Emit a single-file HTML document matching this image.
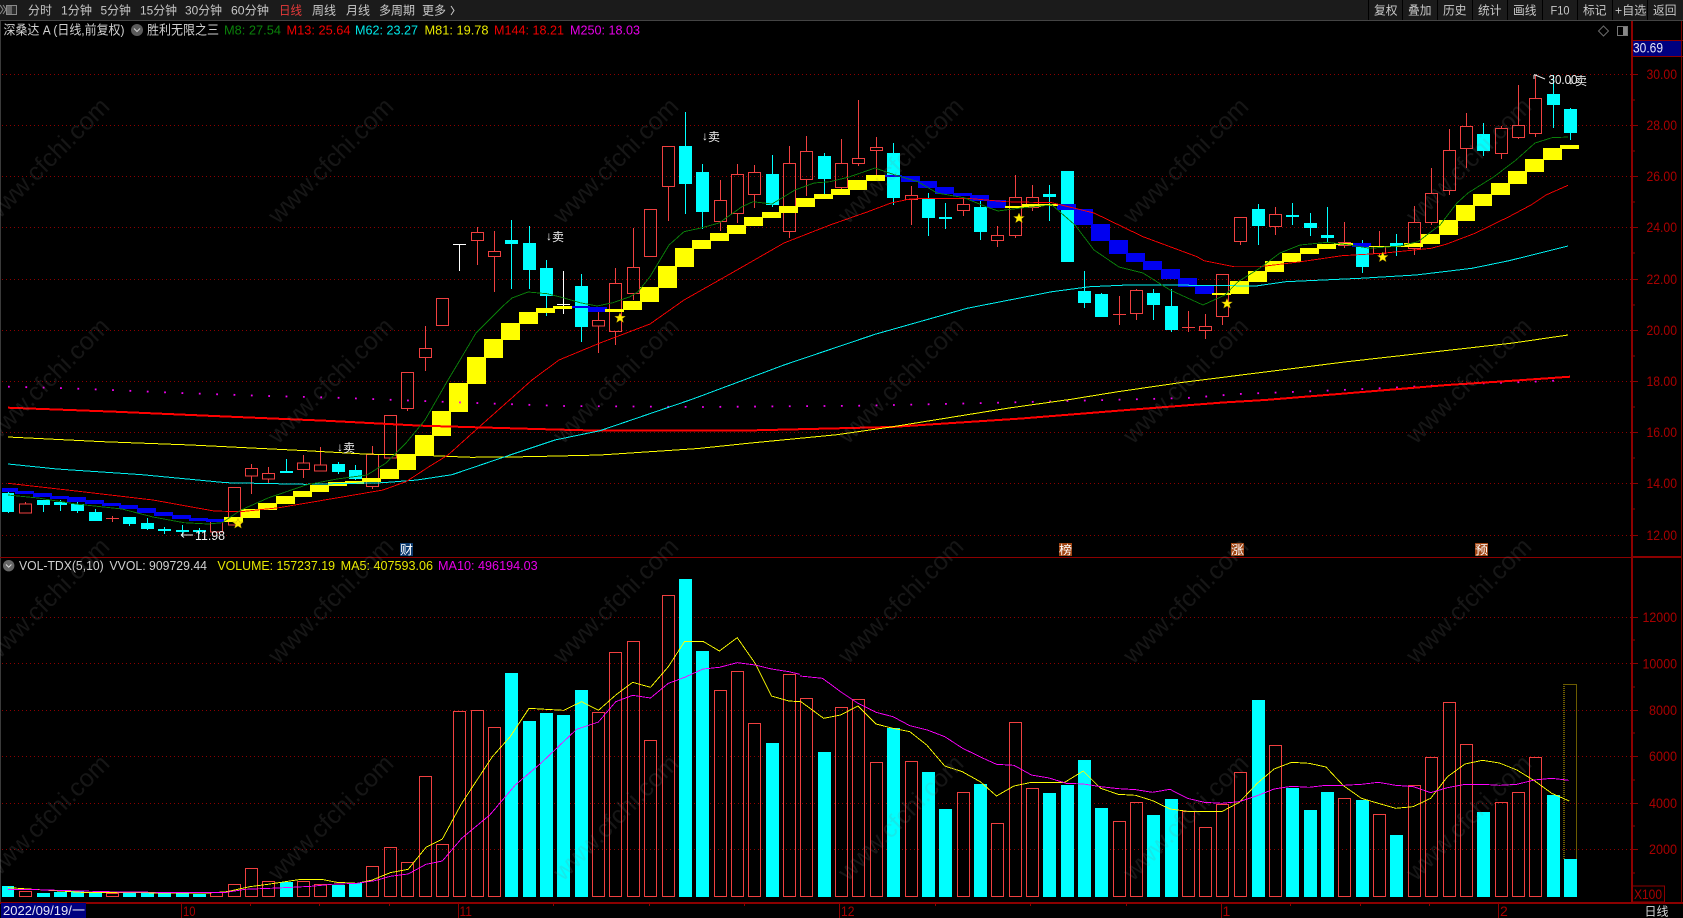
<!DOCTYPE html>
<html lang="zh"><head><meta charset="utf-8"><title>深桑达A</title>
<style>
html,body{margin:0;padding:0;background:#000;width:1683px;height:918px;overflow:hidden}
svg{display:block;font-family:"Liberation Sans","Noto Sans CJK SC",sans-serif}
.t{font-size:12px;fill:#c8c8c8}
.h{font-size:13px}
.ax{font-size:14px;fill:#a80000}
.ln{fill:none;shape-rendering:crispEdges;stroke-width:.9}
</style></head><body>
<svg width="1683" height="918" viewBox="0 0 1683 918" xmlns="http://www.w3.org/2000/svg">
<rect width="1683" height="918" fill="#000"/>
<!-- toolbar -->
<rect width="1683" height="20" fill="#1b1b1b"/>
<rect y="20" width="1683" height="1" fill="#444"/>
<path d="M0 5l3 4.500-3 4.500M3 5l3 4.500-3 4.500" fill="none" stroke="#8a8a8a"/>
<rect x="6.500" y="5.500" width="10" height="9" fill="#2c2c2c" stroke="#8a8a8a"/><rect x="7" y="6" width="5" height="8" fill="#666"/>
<g class="t">
<text class="t" x="28" y="14.5" textLength="24" lengthAdjust="spacingAndGlyphs">分时</text>
<text class="t" x="61" y="14.5" textLength="31" lengthAdjust="spacingAndGlyphs">1分钟</text>
<text class="t" x="100.5" y="14.5" textLength="30.5" lengthAdjust="spacingAndGlyphs">5分钟</text>
<text class="t" x="140" y="14.5" textLength="37" lengthAdjust="spacingAndGlyphs">15分钟</text>
<text class="t" x="185" y="14.5" textLength="37" lengthAdjust="spacingAndGlyphs">30分钟</text>
<text class="t" x="231" y="14.5" textLength="38" lengthAdjust="spacingAndGlyphs">60分钟</text>
<text class="t" x="279" y="14.5" textLength="23" lengthAdjust="spacingAndGlyphs" style="fill:#e83a3a">日线</text>
<text class="t" x="312" y="14.5" textLength="24" lengthAdjust="spacingAndGlyphs">周线</text>
<text class="t" x="346" y="14.5" textLength="24" lengthAdjust="spacingAndGlyphs">月线</text>
<text class="t" x="379" y="14.5" textLength="36" lengthAdjust="spacingAndGlyphs">多周期</text>
<text class="t" x="422" y="14.5" textLength="24" lengthAdjust="spacingAndGlyphs">更多</text>
<path d="M451 6l3 4.500-3 4.500" fill="none" stroke="#c8c8c8"/>
<text class="t" x="1374" y="14.500" textLength="23.500" lengthAdjust="spacingAndGlyphs">复权</text>
<text class="t" x="1408" y="14.500" textLength="23.500" lengthAdjust="spacingAndGlyphs">叠加</text>
<text class="t" x="1443" y="14.500" textLength="23.500" lengthAdjust="spacingAndGlyphs">历史</text>
<text class="t" x="1478" y="14.500" textLength="23.500" lengthAdjust="spacingAndGlyphs">统计</text>
<text class="t" x="1513" y="14.500" textLength="23.500" lengthAdjust="spacingAndGlyphs">画线</text>
<text class="t" x="1550.500" y="14.500" textLength="19" lengthAdjust="spacingAndGlyphs">F10</text>
<text class="t" x="1583" y="14.500" textLength="23.500" lengthAdjust="spacingAndGlyphs">标记</text>
<text class="t" x="1615" y="14.500" textLength="31.500" lengthAdjust="spacingAndGlyphs">+自选</text>
<text class="t" x="1653" y="14.500" textLength="23.500" lengthAdjust="spacingAndGlyphs">返回</text>
</g>
<path d="M1368.500 0V20M1402.500 0V20M1437.500 0V20M1472.500 0V20M1507.500 0V20M1542.500 0V20M1577.500 0V20M1612.500 0V20M1647.500 0V20" stroke="#000" shape-rendering="crispEdges"/>

<!-- header -->
<text class="h" x="3.500" y="34.500" fill="#d0d0d0" textLength="121" lengthAdjust="spacingAndGlyphs">深桑达 A (日线,前复权)</text>
<circle cx="137" cy="30" r="6" fill="#5a5a5a"/><path d="M134 28.500l3 3 3-3" fill="none" stroke="#d0d0d0"/>
<text class="h" x="147" y="34.500" fill="#d0d0d0" textLength="72" lengthAdjust="spacingAndGlyphs">胜利无限之三</text>
<text class="h" x="224" y="34.500" fill="#0a800a" textLength="57" lengthAdjust="spacingAndGlyphs">M8: 27.54</text>
<text class="h" x="286.500" y="34.500" fill="#f00000" textLength="64" lengthAdjust="spacingAndGlyphs">M13: 25.64</text>
<text class="h" x="355" y="34.500" fill="#00e8e8" textLength="63" lengthAdjust="spacingAndGlyphs">M62: 23.27</text>
<text class="h" x="424.500" y="34.500" fill="#e8e800" textLength="64" lengthAdjust="spacingAndGlyphs">M81: 19.78</text>
<text class="h" x="494" y="34.500" fill="#f00000" textLength="70" lengthAdjust="spacingAndGlyphs">M144: 18.21</text>
<text class="h" x="570" y="34.500" fill="#e800e8" textLength="70" lengthAdjust="spacingAndGlyphs">M250: 18.03</text>

<!-- top right icons -->
<path d="M1603.500 26l5 5-5 5-5-5z" fill="none" stroke="#6a6a6a"/>
<rect x="1617.500" y="26.500" width="10" height="9" fill="none" stroke="#777"/><rect x="1623" y="27" width="4" height="8" fill="#888"/>

<!-- grid -->
<path d="M2 74.500H1632M2 125.500H1632M2 176.500H1632M2 227.500H1632M2 279.500H1632M2 330.500H1632M2 381.500H1632M2 432.500H1632M2 483.500H1632M2 535.500H1632M2 617.500H1632M2 663.500H1632M2 710.500H1632M2 756.500H1632M2 803.500H1632M2 849.500H1632" stroke="#8c0000" stroke-dasharray="1 3" shape-rendering="crispEdges"/>

<!-- red candles -->
<path fill="none" stroke="#f04040" shape-rendering="crispEdges" d="
M19.500 504h12v9h-12zM25.500 502v2
M106 518.500h13M112.500 516v6
M210.500 520h12v12h-12z
M228.500 487.500h12V525h-12z
M245.500 468.500h12V476h-12zM251.500 464v4M251.500 476v18
M262.500 473.500h12V479h-12zM268.500 467v6M268.500 479v4
M297.500 463h12v6.500h-12zM303.500 455v8M303.500 470v8
M314.500 465h12v6h-12zM320.500 447v18
M366.500 454.500h12v32h-12zM372.500 446v8M372.500 487v2
M384.500 415.500h12V458h-12z
M401.500 372.500h12v36h-12zM407.500 409v2
M419.500 348.500h12v9h-12zM425.500 326v22M425.500 358v13
M436.500 298.500h12v27h-12z
M471.500 232.500h12v8h-12zM477.500 227v5M477.500 241v24
M488.500 251.500h12v5h-12zM494.500 231v20M494.500 257v35
M592.500 320.500h12v5.500h-12zM598.500 312v8M598.500 326v27
M609.500 283.500h12v48h-12zM615.500 268v15M615.500 332v13
M627.500 267.500h12v26h-12zM633.500 228v39M633.500 294v6
M644.500 209.500h12v47h-12z
M662.500 146.500h12v40h-12zM668.500 187v34
M714.500 200.500h12v21h-12zM720.500 180v20M720.500 222v9
M731.500 174.500h12v39h-12zM737.500 164v10M737.500 214v9
M748.500 172.500h12v22h-12zM754.500 165v7M754.500 195v13
M783.500 163.500h12v68h-12zM789.500 146v17M789.500 232v6
M800.500 151.500h12v28h-12zM806.500 136v15M806.500 180v16
M835.500 163.500h12v24h-12zM841.500 139v24M841.500 188v2
M852.500 158.500h12v5h-12zM858.500 100v58M858.500 164v2
M870.500 147.500h12v3h-12zM876.500 137v10M876.500 151v24
M905.500 195.500h12v4h-12zM911.500 186v9M911.500 200v25
M957.500 204.500h12v6h-12zM963.500 198v6M963.500 211v5
M991.500 235.500h12v5h-12zM997.500 226v9M997.500 241v6
M1009.500 197.500h12v38h-12zM1015.500 175v22M1015.500 236v2
M1026.500 197.500h12v10h-12zM1032.500 185v12M1032.500 208v3
M1113 314.500h13M1119.500 296v29
M1130.500 290.500h12v23h-12zM1136.500 289v1M1136.500 314v6
M1182 327.500h13M1188.500 311v21
M1199.500 326.500h12v4h-12zM1205.500 314v12M1205.500 331v8
M1216.500 274.500h12v42h-12zM1222.500 317v8
M1234.500 217.500h12v24h-12zM1240.500 242v3
M1269.500 214.500h12v12h-12zM1275.500 207v7M1275.500 227v8
M1338.500 242.500h12v3h-12zM1344.500 222v20M1344.500 246v2
M1373.500 246.500h12v7h-12zM1379.500 231v15M1379.500 254v2
M1408.500 222.500h12v26h-12zM1414.500 206v16M1414.500 249v6
M1425.500 193.500h12v29h-12zM1431.500 168v25M1431.500 223v2
M1443.500 150.500h12v40h-12zM1449.500 129v21M1449.500 191v4
M1460.500 126.500h12v22h-12zM1466.500 113v13M1466.500 149v19
M1495.500 128.500h12v25h-12zM1501.500 126v2M1501.500 154v5
M1512.500 125.500h12v12h-12zM1518.500 85v40M1518.500 138v1
M1529.500 98.500h12v35h-12zM1535.500 75v23M1535.500 134v3"/>
<!-- cyan wicks -->
<path fill="none" stroke="#00ffff" shape-rendering="crispEdges" d="
M8.500 490V513M43.500 500V512M60.500 500V511M77.500 502V513M95.500 509V521M129.500 517V526M147.500 518V530M164.500 527V534M182.500 525V537M199.500 528V534M286.500 459V473M338.500 462V474M355.500 465V480M511.500 220V289M529.500 226V289M546.500 260V316M581.500 274V342M685.500 112V214M702.500 164V229M772.500 155V207M824.500 153V195M893.500 143V205M928.500 193V236M945.500 203V229M980.500 200V240M1049.500 185V221M1084.500 271V308M1101.500 293V317M1153.500 289V320M1171.500 289V332M1258.500 204V245M1292.500 203V225M1310.500 213V236M1327.500 207V242M1362.500 240V273M1396.500 234V256M1483.500 123V156M1553.500 75V128M1570.500 108V140"/>
<!-- cyan bodies -->
<path fill="#00ffff" d="
M2 493h12v19H2zM37 500h13v5H37zM54 502h13v3H54zM71 504h13v7H71zM89 512h13v9H89zM123 517h13v7h-13zM141 523h13v6h-13zM158 529h13v2h-13zM176 530h13v2h-13zM193 530h13v2h-13zM280 471h13v2h-13zM332 464h13v8h-13zM349 470h13v9h-13zM505 240h13v4h-13zM523 243h13v27h-13zM540 268h13v28h-13zM575 286h13v41h-13zM679 146h13v38h-13zM696 172h13v40h-13zM766 174h13v31h-13zM818 156h13v23h-13zM887 153h13v45h-13zM922 199h13v19h-13zM939 217h13v2h-13zM974 207h13v25h-13zM1043 194h13v3h-13zM1061 171h13v91h-13zM1078 291h13v12h-13zM1095 294h13v23h-13zM1147 293h13v12h-13zM1165 306h13v24h-13zM1252 209h13v17h-13zM1286 215h13v2h-13zM1304 223h13v5h-13zM1321 235h13v3h-13zM1356 243h13v24h-13zM1390 243h13v4h-13zM1477 134h13v17h-13zM1547 94h13v11h-13zM1564 109h13v24h-13z"/>
<!-- white doji -->
<path fill="none" stroke="#fff" shape-rendering="crispEdges" d="M453 244.500h13M459.500 244V271M557 304.500h13M563.500 271V314"/>

<!-- staircase -->
<path fill="#0000f0" d="M2 488H18V492H2zM15 491h19v3H15zM33 493h19v4H33zM50 496h19v3H50zM67 497h19v5H67zM85 500h19v4H85zM102 503h19v3H102zM119 505h19v4H119zM137 508h19v5H137zM154 512h19v4H154zM172 515h19v4H172zM189 518h19v3H189zM206 519h19v3H206zM571 306h19v2H571zM588 307h19v5H588zM883 175h19v2H883zM901 176h19v6H901zM918 181h19v7H918zM935 187h19v7H935zM953 193h19v3H953zM970 195h19v6H970zM987 200h19v8H987zM1057 204h19v6H1057zM1074 209h19v16H1074zM1091 224h19v17H1091zM1109 240h19v14H1109zM1126 253h19v9H1126zM1143 261h19v9H1143zM1161 269h19v10H1161zM1178 278h19v9H1178zM1195 286h19v8H1195zM1352 243h19v4H1352z"/>
<path fill="#ffff00" d="M224 517h19v5H224zM241 509h19v9H241zM258 503h19v7H258zM276 496h19v8H276zM293 491h19v6H293zM310 485h19v7H310zM328 482h19v4H328zM345 481h19v3H345zM362 478h19v4H362zM380 469h19v10H380zM397 454h19v16H397zM415 435h19v21H415zM432 411h19v25H432zM449 383h19v29H449zM467 357h19v27H467zM484 339h19v19H484zM501 323h19v17H501zM519 312h19v12H519zM536 308h19v5H536zM553 306h19v3H553zM605 309h19v3H605zM623 301h19v9H623zM640 287h19v15H640zM658 266h19v22H658zM675 248h19v19H675zM692 240h19v9H692zM710 233h19v8H710zM727 225h19v9H727zM744 217h19v9H744zM762 212h19v6H762zM779 206h19v7H779zM796 198h19v9H796zM814 194h19v5H814zM831 189h19v6H831zM848 180h19v10H848zM866 175h19v6H866zM1005 206h19v2H1005zM1022 204h19v3H1022zM1039 204h19v2H1039zM1212 293h19v2H1212zM1230 281h19v13H1230zM1248 271h19v11H1248zM1265 261h19v11H1265zM1282 253h19v9H1282zM1300 248h19v6H1300zM1317 244h19v5H1317zM1334 243h19v2H1334zM1369 246h19v1H1369zM1386 246h19v1H1386zM1404 243h19v4H1404zM1421 234h19v10H1421zM1439 220h19v15H1439zM1456 205h19v16H1456zM1473 194h19v12H1473zM1491 183h19v12H1491zM1508 171h19v13H1508zM1525 159h19v13H1525zM1543 148h19v12H1543zM1560 145h19v4H1560z"/>

<!-- MAs -->
<polyline fill="none" stroke="#f000f0" stroke-width="1.800" stroke-dasharray="1.800 15.560" points="8,386.700 59,388 111,390 180,393 268,396 337,397.700 388,399.700 476,403 563,406 700,407 860,405.700 966,403.500 1187,398 1238,394 1325,390.700 1393,387.700 1465,384 1533,381.700 1568,380"/>
<polyline class="ln" stroke="#ff0000" style="stroke-width:2" points="8,407.700 115,411.700 230,416.700 325,420.700 421,425.700 536,429 600,430.700 751,430.400 891,427 1020,418.600 1127,410 1223,402.500 1265,400 1347,393.300 1447,385 1513,380.700 1570,376.700"/>
<polyline class="ln" stroke="#ffff00" style="stroke-width:1" points="8,437 103,441.700 191,445 306,450.700 364,454 432,455.700 471,457.300 528,456.700 600,455 697,448.600 751,443 837,434.700 891,427 1009,408 1071,399.300 1116,392 1180,382.700 1347,361.700 1513,343 1568,335"/>
<polyline class="ln" stroke="#00f0f0" style="stroke-width:1" points="8,464 57,469 142,474.700 226,482.700 306,484.300 383,482.700 417,480 452,474.700 505,456.700 555,440 600,430.700 692,399.300 784,365 875,334.300 967,308.300 1052,291.700 1090,286.700 1128,285 1200,285.300 1256,286 1286,281.700 1360,278.300 1416,275 1472,268.300 1509,260.700 1568,246"/>
<polyline class="ln" stroke="#ff0000" points="8,483.300 76,491 153,500 214,511 241,511.700 279,507.700 344,496.700 383,490 406,481.700 429,466.700 448,455 478,428 532,380 559,360 600,343 650,324 684,300 734,271.700 784,243 830,225 868,211.700 891,203 910,199 925,198.300 967,198.300 1006,201.700 1052,202.700 1094,213 1143,236.700 1197,256.700 1204,260.700 1234,266.700 1260,266.700 1301,261.700 1342,255.700 1382,253.300 1431,248.300 1446,244.300 1475,233.300 1509,216.700 1531,205 1546,195 1568,185.300"/>
<polyline class="ln" stroke="#0a800a" points="8,495 38,498 76,504 122,509 153,517 184,522.700 208,524 222,522.700 241,510 268,498 306,485 337,479 367,475 386,463 406,443 425,420 448,380 460,360 476,333 503,306 512,298 528,292 547,293.700 563,297.700 580,302.700 597,306 613,302.700 630,296.700 638,291.700 650,276.700 669,245 684,231.700 701,228 719,223 742,206.700 753,201.700 772,204 795,190 814,183 830,181.700 849,177 875,168 895,175 918,181.700 937,193 964,197.700 986,206.700 998,211 1021,208 1052,205 1075,225 1094,250 1119,267 1143,273 1170,290 1203,305 1225,295 1238,281.700 1260,268 1280,253 1300,245 1327,242.300 1350,245 1370,248.300 1400,246 1418,241.700 1440,225 1457,203 1468,193 1494,176.700 1516,160 1535,143 1552,137.700 1568,137"/>

<!-- stars -->
<g fill="#ffee00" stroke="#b09000" stroke-width=".4">
<path d="M238 518.500l1.500 3.500h3.800l-3 2.400 1.100 3.700-3.400-2.100-3.400 2.100 1.100-3.700-3-2.400h3.800z"/>
<path d="M620 312.800l1.500 3.500h3.800l-3 2.400 1.100 3.700-3.400-2.100-3.400 2.100 1.100-3.700-3-2.400h3.800z"/>
<path d="M1019 213l1.500 3.500h3.800l-3 2.400 1.100 3.700-3.400-2.100-3.400 2.100 1.100-3.700-3-2.400h3.800z"/>
<path d="M1227 298.500l1.500 3.500h3.800l-3 2.400 1.100 3.700-3.400-2.100-3.400 2.100 1.100-3.700-3-2.400h3.800z"/>
<path d="M1382.700 252l1.500 3.500h3.800l-3 2.400 1.100 3.700-3.400-2.100-3.400 2.100 1.100-3.700-3-2.400h3.800z"/>
</g>

<!-- annotations -->
<g fill="#f0f0f0" font-size="12">
<text x="552" y="241">卖</text><text x="546" y="240">↓</text>
<text x="708" y="141">卖</text><text x="702" y="140">↓</text>
<text x="343" y="452">卖</text><text x="337" y="451">↓</text>
<text x="1575" y="85">卖</text><text x="1568" y="84">↓</text>
<text x="1548.500" y="84" font-size="13" textLength="29" lengthAdjust="spacingAndGlyphs">30.00</text>
<text x="195" y="540" font-size="13" textLength="30" lengthAdjust="spacingAndGlyphs">11.98</text>
</g>
<path d="M1534 74.500l11 4.500M1534 75v4M1534 75h3M181 535h12M181 535l3-2.500M181 535l3 2.500" stroke="#e8e8e8" fill="none"/>

<!-- markers -->
<rect x="400" y="543" width="13" height="13" fill="#0b3a6e"/><text x="400" y="554" font-size="12" fill="#fff" textLength="13" lengthAdjust="spacingAndGlyphs">财</text>
<rect x="1059" y="543" width="13" height="13" fill="#a04412"/><text x="1059" y="554" font-size="12" fill="#fff" textLength="13" lengthAdjust="spacingAndGlyphs">榜</text>
<rect x="1231" y="543" width="13" height="13" fill="#a04412"/><text x="1231" y="554" font-size="12" fill="#fff" textLength="13" lengthAdjust="spacingAndGlyphs">涨</text>
<rect x="1475" y="543" width="13" height="13" fill="#a04412"/><text x="1475" y="554" font-size="12" fill="#fff" textLength="13" lengthAdjust="spacingAndGlyphs">预</text>

<!-- volume pane header -->
<circle cx="8.700" cy="565.700" r="5.700" fill="#666"/><path d="M6 564.500l2.700 2.700 2.700-2.700" fill="none" stroke="#ddd"/>
<text class="h" x="19" y="570" fill="#d0d0d0" textLength="84.700" lengthAdjust="spacingAndGlyphs">VOL-TDX(5,10)</text>
<text class="h" x="109.500" y="570" fill="#d0d0d0" textLength="97.500" lengthAdjust="spacingAndGlyphs">VVOL: 909729.44</text>
<text class="h" x="217.400" y="570" fill="#e8e800" textLength="117.600" lengthAdjust="spacingAndGlyphs">VOLUME: 157237.19</text>
<text class="h" x="340.600" y="570" fill="#e8e800" textLength="92.400" lengthAdjust="spacingAndGlyphs">MA5: 407593.06</text>
<text class="h" x="438" y="570" fill="#e800e8" textLength="99.700" lengthAdjust="spacingAndGlyphs">MA10: 496194.03</text>

<!-- volume bars -->
<path fill="#00ffff" d="M2 886h12V897H2zM37 893h13V897H37zM54 892h13V897H54zM71 891h13V897H71zM89 893h13V897H89zM123 893h13V897H123zM141 893h13V897H141zM158 893h13V897H158zM176 893h13V897H176zM193 894h13V897H193zM280 882h13V897H280zM332 885h13V897H332zM349 883h13V897H349zM505 673h13V897H505zM523 721h13V897H523zM540 713h13V897H540zM557 715h13V897H557zM575 690h13V897H575zM679 579h13V897H679zM696 651h13V897H696zM766 743h13V897H766zM818 752h13V897H818zM887 728h13V897H887zM922 772h13V897H922zM939 809h13V897H939zM974 784h13V897H974zM1043 793h13V897H1043zM1061 785h13V897H1061zM1078 760h13V897H1078zM1095 808h13V897H1095zM1147 815h13V897H1147zM1165 799h13V897H1165zM1252 700h13V897H1252zM1286 788h13V897H1286zM1304 810h13V897H1304zM1321 792h13V897H1321zM1356 800h13V897H1356zM1390 835h13V897H1390zM1477 812h13V897H1477zM1547 795h13V897H1547zM1564 859h13V897H1564z"/>
<path fill="none" stroke="#f04040" shape-rendering="crispEdges" d="M19.500 891.500h12V896.500h-12zM106.500 893.500h12V896.500h-12zM210.500 892.500h12V896.500h-12zM228.500 884.500h12V896.500h-12zM245.500 868.500h12V896.500h-12zM262.500 881.500h12V896.500h-12zM297.500 881.500h12V896.500h-12zM314.500 884.500h12V896.500h-12zM366.500 866.500h12V896.500h-12zM384.500 847.500h12V896.500h-12zM401.500 862.500h12V896.500h-12zM419.500 776.500h12V896.500h-12zM436.500 844.500h12V896.500h-12zM453.500 711.500h12V896.500h-12zM471.500 710.500h12V896.500h-12zM488.500 727.500h12V896.500h-12zM592.500 712.500h12V896.500h-12zM609.500 652.500h12V896.500h-12zM627.500 641.500h12V896.500h-12zM644.500 740.500h12V896.500h-12zM662.500 595.500h12V896.500h-12zM714.500 690.500h12V896.500h-12zM731.500 671.500h12V896.500h-12zM748.500 723.500h12V896.500h-12zM783.500 674.500h12V896.500h-12zM800.500 698.500h12V896.500h-12zM835.500 707.500h12V896.500h-12zM852.500 699.500h12V896.500h-12zM870.500 762.500h12V896.500h-12zM905.500 761.500h12V896.500h-12zM957.500 792.500h12V896.500h-12zM991.500 823.500h12V896.500h-12zM1009.500 722.500h12V896.500h-12zM1026.500 788.500h12V896.500h-12zM1113.500 821.500h12V896.500h-12zM1130.500 802.500h12V896.500h-12zM1182.500 811.500h12V896.500h-12zM1199.500 827.500h12V896.500h-12zM1216.500 804.500h12V896.500h-12zM1234.500 772.500h12V896.500h-12zM1269.500 745.500h12V896.500h-12zM1338.500 798.500h12V896.500h-12zM1373.500 814.500h12V896.500h-12zM1408.500 785.500h12V896.500h-12zM1425.500 757.500h12V896.500h-12zM1443.500 702.500h12V896.500h-12zM1460.500 744.500h12V896.500h-12zM1495.500 802.500h12V896.500h-12zM1512.500 792.500h12V896.500h-12zM1529.500 757.500h12V896.500h-12z"/>
<path d="M1564 859V684.500H1576.500V859" fill="none" stroke="#d8b800" stroke-dasharray="1 1" shape-rendering="crispEdges"/>

<!-- volume MA lines -->
<g transform="translate(0 620) scale(.5102 .3333)" fill="none" shape-rendering="crispEdges">
<polyline vector-effect="non-scaling-stroke" stroke="#ffff00" stroke-width=".9" points="16,803 85,810 170,818 240,817 310,819 410,819 445,815 490,800 525,793 590,778 630,778 660,787 700,790 730,780 765,758 800,748 835,682 867,657 905,550 965,410 1000,350 1037,265 1070,268 1105,271 1140,245 1173,271 1207,225 1240,187 1275,202 1310,140 1342,64 1378,64 1410,93 1445,53 1480,130 1512,228 1546,243 1568,245"/>
<polyline vector-effect="non-scaling-stroke" stroke="#ff00ff" stroke-width=".9" points="16,808 70,809 135,812 205,815 305,817 370,818 440,818 480,808 545,804 610,799 650,793 700,790 735,782 765,769 800,762 835,733 867,723 905,655 960,585 1010,495 1060,430 1130,328 1173,306 1207,245 1240,226 1275,234 1310,190 1342,172 1378,147 1410,142 1445,128 1480,135 1512,147 1546,155 1568,163"/>
</g>
<g transform="translate(800 620) scale(.5631 .3333)" fill="none" shape-rendering="crispEdges">
<polyline vector-effect="non-scaling-stroke" stroke="#ffff00" stroke-width=".9" points="0,243 42,295 72,285 103,258 135,312 165,325 195,335 225,375 257,438 288,455 320,485 349,528 380,498 411,487 470,487 503,453 534,505 565,523 596,526 626,542 657,567 688,574 749,575 780,547 812,490 842,447 873,427 904,430 934,441 965,497 997,535 1027,550 1058,565 1089,560 1120,535 1150,470 1181,432 1212,421 1242,429 1273,450 1304,482 1335,520 1366,543"/>
<polyline vector-effect="non-scaling-stroke" stroke="#ff00ff" stroke-width=".9" points="0,168 40,175 72,215 103,250 135,277 165,290 195,317 226,330 257,350 288,384 319,410 349,433 380,436 411,465 442,474 473,490 503,492 534,500 565,506 596,509 626,517 657,508 688,535 718,547 749,550 780,545 812,527 842,507 873,499 904,502 934,496 965,496 997,493 1027,487 1058,496 1089,500 1120,518 1150,503 1181,493 1212,493 1242,496 1273,493 1304,480 1335,475 1366,481"/>
</g>

<!-- frame & axes -->
<rect x="0" y="21" width="1" height="882" fill="#3a3a3a"/>
<path d="M0 557.500H1632" stroke="#8c0000" shape-rendering="crispEdges"/>
<rect x="1632" y="556" width="50" height="2" fill="#8c0000"/>
<rect x="1631" y="21" width="2" height="882" fill="#8c0000"/>
<rect x="1681" y="21" width="1" height="882" fill="#7a0000"/>
<rect x="0" y="902" width="1683" height="2" fill="#8c0000"/>
<path d="M1633 74.500h5M1633 125.500h5M1633 176.500h5M1633 227.500h5M1633 279.500h5M1633 330.500h5M1633 381.500h5M1633 432.500h5M1633 483.500h5M1633 535.500h5M1633 100h2M1633 151h2M1633 202h2M1633 253h2M1633 305h2M1633 356h2M1633 407h2M1633 458h2M1633 509h2M1633 617.500h5M1633 663.500h5M1633 710.500h5M1633 756.500h5M1633 803.500h5M1633 849.500h5M1633 640h2M1633 687h2M1633 733h2M1633 780h2M1633 826h2M1633 873h2" stroke="#8c0000" shape-rendering="crispEdges"/>
<rect x="1633" y="40" width="48" height="17" fill="#000080"/><path d="M1633 40.500h50M1633 56.500h50" stroke="#8c0000"/>
<text x="1633" y="52.500" font-size="14" fill="#e4e4f4" textLength="30" lengthAdjust="spacingAndGlyphs">30.69</text>
<g class="ax">
<text class="ax" x="1646.500" y="79" textLength="30.500" lengthAdjust="spacingAndGlyphs">30.00</text>
<text class="ax" x="1646.500" y="130" textLength="30.500" lengthAdjust="spacingAndGlyphs">28.00</text>
<text class="ax" x="1646.500" y="181" textLength="30.500" lengthAdjust="spacingAndGlyphs">26.00</text>
<text class="ax" x="1646.500" y="232" textLength="30.500" lengthAdjust="spacingAndGlyphs">24.00</text>
<text class="ax" x="1646.500" y="284" textLength="30.500" lengthAdjust="spacingAndGlyphs">22.00</text>
<text class="ax" x="1646.500" y="335" textLength="30.500" lengthAdjust="spacingAndGlyphs">20.00</text>
<text class="ax" x="1646.500" y="386" textLength="30.500" lengthAdjust="spacingAndGlyphs">18.00</text>
<text class="ax" x="1646.500" y="437" textLength="30.500" lengthAdjust="spacingAndGlyphs">16.00</text>
<text class="ax" x="1646.500" y="488" textLength="30.500" lengthAdjust="spacingAndGlyphs">14.00</text>
<text class="ax" x="1646.500" y="540" textLength="30.500" lengthAdjust="spacingAndGlyphs">12.00</text>
<text class="ax" x="1642.500" y="622" textLength="34.500" lengthAdjust="spacingAndGlyphs">12000</text>
<text class="ax" x="1642.500" y="668.500" textLength="34.500" lengthAdjust="spacingAndGlyphs">10000</text>
<text class="ax" x="1649" y="715" textLength="28" lengthAdjust="spacingAndGlyphs">8000</text>
<text class="ax" x="1649" y="761" textLength="28" lengthAdjust="spacingAndGlyphs">6000</text>
<text class="ax" x="1649" y="808" textLength="28" lengthAdjust="spacingAndGlyphs">4000</text>
<text class="ax" x="1649" y="854" textLength="28" lengthAdjust="spacingAndGlyphs">2000</text>
<text class="ax" x="1634" y="899" textLength="28" lengthAdjust="spacingAndGlyphs">X100</text>
</g>
<rect x="1632.500" y="886" width="32" height="16" fill="none" stroke="#8c0000"/>

<!-- date axis -->
<rect x="1" y="903" width="85" height="15" fill="#000080"/>
<text x="3" y="915" font-size="13" fill="#e4e4f4" textLength="82" lengthAdjust="spacingAndGlyphs">2022/09/19/一</text>
<path d="M181.500 903V918M458.500 903V918M839.500 903V918M1221.500 903V918M1498.500 903V918M250.500 903v3M319.500 903v3M389.500 903v3M553.500 903v3M649.500 903v3M744.500 903v3M935.500 903v3M1030.500 903v3M1126.500 903v3M1290.500 903v3M1360.500 903v3M1429.500 903v3" stroke="#8c0000" shape-rendering="crispEdges"/>
<g class="ax">
<text class="ax" x="183" y="916" textLength="12.500" lengthAdjust="spacingAndGlyphs">10</text>
<text class="ax" x="459.500" y="916" textLength="12.500" lengthAdjust="spacingAndGlyphs">11</text>
<text class="ax" x="841" y="916" textLength="13.500" lengthAdjust="spacingAndGlyphs">12</text>
<text class="ax" x="1222.500" y="916">1</text>
<text class="ax" x="1500" y="916">2</text>
</g>
<text x="1644.500" y="915.500" font-size="12" fill="#d8d8d8" textLength="24" lengthAdjust="spacingAndGlyphs">日线</text>

<!-- watermark -->
<g font-size="25" fill="#808080" fill-opacity=".17" text-anchor="end">
<text transform="translate(111 108) rotate(-45)">www.cfchi.com</text><text transform="translate(395 108) rotate(-45)">www.cfchi.com</text><text transform="translate(680 108) rotate(-45)">www.cfchi.com</text><text transform="translate(965 108) rotate(-45)">www.cfchi.com</text><text transform="translate(1250 108) rotate(-45)">www.cfchi.com</text><text transform="translate(1533 108) rotate(-45)">www.cfchi.com</text>
<text transform="translate(111 328) rotate(-45)">www.cfchi.com</text><text transform="translate(395 328) rotate(-45)">www.cfchi.com</text><text transform="translate(680 328) rotate(-45)">www.cfchi.com</text><text transform="translate(965 328) rotate(-45)">www.cfchi.com</text><text transform="translate(1250 328) rotate(-45)">www.cfchi.com</text><text transform="translate(1533 328) rotate(-45)">www.cfchi.com</text>
<text transform="translate(111 548) rotate(-45)">www.cfchi.com</text><text transform="translate(395 548) rotate(-45)">www.cfchi.com</text><text transform="translate(680 548) rotate(-45)">www.cfchi.com</text><text transform="translate(965 548) rotate(-45)">www.cfchi.com</text><text transform="translate(1250 548) rotate(-45)">www.cfchi.com</text><text transform="translate(1533 548) rotate(-45)">www.cfchi.com</text>
<text transform="translate(111 765) rotate(-45)">www.cfchi.com</text><text transform="translate(395 765) rotate(-45)">www.cfchi.com</text><text transform="translate(680 765) rotate(-45)">www.cfchi.com</text><text transform="translate(965 765) rotate(-45)">www.cfchi.com</text><text transform="translate(1250 765) rotate(-45)">www.cfchi.com</text><text transform="translate(1533 765) rotate(-45)">www.cfchi.com</text>
</g>
</svg>
</body></html>
